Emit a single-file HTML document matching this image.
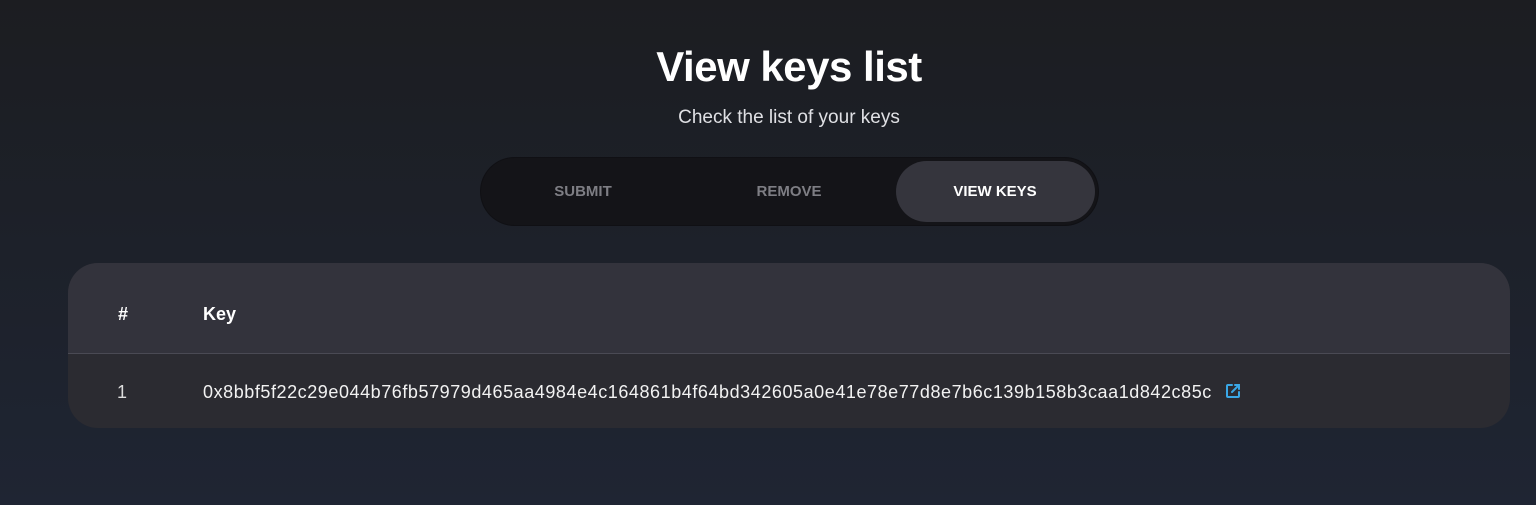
<!DOCTYPE html>
<html><head><style>
html,body{margin:0;padding:0}
body{width:1536px;height:505px;overflow:hidden;font-family:"Liberation Sans",sans-serif;color:#fff;
background:linear-gradient(180deg,#1c1d21 0%,#1d212a 50%,#1f2533 100%);position:relative}
h1{position:absolute;top:43px;left:0;width:1578px;text-align:center;margin:0;font-size:42px;font-weight:bold;letter-spacing:-0.5px}
.sub{position:absolute;top:107px;left:0;width:1578px;text-align:center;font-size:19px;color:#dfe0e4}
.tabs{position:absolute;left:481px;top:158px;width:617px;height:67px;border-radius:34px;background:#141418;box-shadow:0 0 0 1px #101014}
.tab{position:absolute;top:0;height:67px;line-height:67px;font-size:15px;font-weight:bold;color:#7e7e84;text-align:center;width:200px}
.act{position:absolute;left:415px;top:3px;width:199px;height:61px;border-radius:31px;background:#35353d}
.card{position:absolute;left:68px;top:263px;width:1442px;height:165px;border-radius:30px;overflow:hidden;background:#2b2b31}
.hd{height:90px;background:#33333c;border-bottom:1px solid #4a4a54;position:relative}
.c{position:absolute;font-size:18px}
</style></head><body>
<h1>View keys list</h1>
<div class="sub">Check the list of your keys</div>
<div class="tabs">
<div class="act"></div>
<div class="tab" style="left:2px">SUBMIT</div>
<div class="tab" style="left:208px">REMOVE</div>
<div class="tab" style="left:414px;color:#fff">VIEW KEYS</div>
</div>
<div class="card">
<div class="hd">
<div class="c" style="left:50px;top:41px;font-weight:bold">#</div>
<div class="c" style="left:135px;top:41px;font-weight:bold">Key</div>
</div>
<div class="c" style="left:49px;top:119px;color:#ddd">1</div>
<div class="c" style="left:135px;top:119px;letter-spacing:0.56px;color:#f2f2f2">0x8bbf5f22c29e044b76fb57979d465aa4984e4c164861b4f64bd342605a0e41e78e77d8e7b6c139b158b3caa1d842c85c</div>
<svg style="position:absolute;left:1157px;top:120px" width="16" height="16" viewBox="0 0 16 16" fill="none" stroke="#3aa7e6" stroke-width="2" stroke-linecap="round"><path d="M7 2H3a1 1 0 0 0-1 1v10a1 1 0 0 0 1 1h10a1 1 0 0 0 1-1V9"/><path d="M10 2h4v4M14 2L7 9"/></svg>
</div>
</body></html>
